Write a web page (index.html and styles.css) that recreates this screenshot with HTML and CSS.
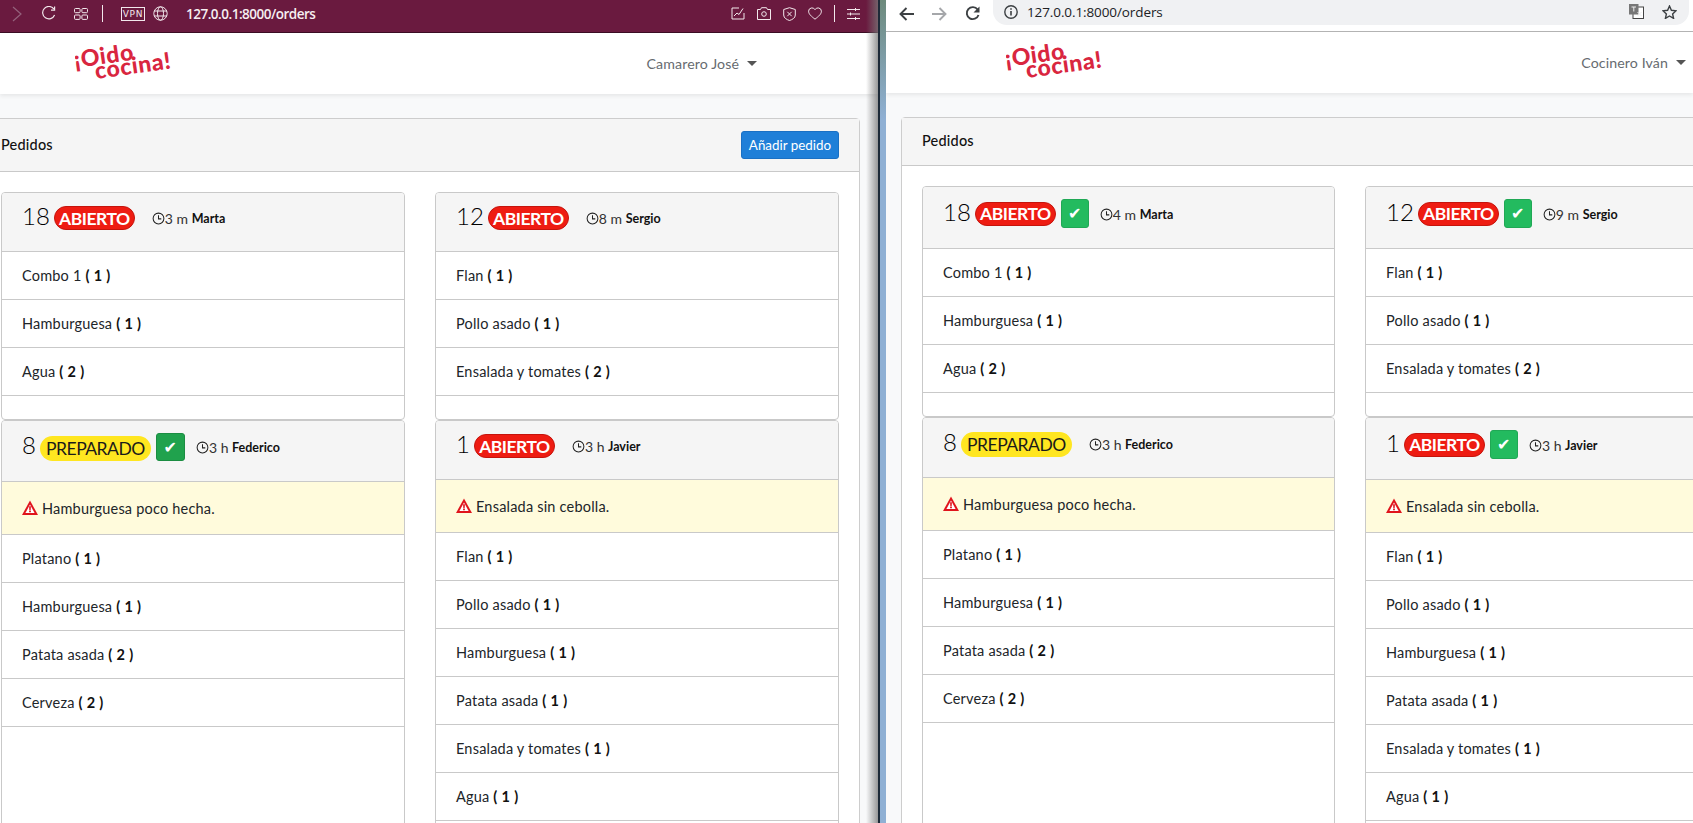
FILE: index.html
```html
<!DOCTYPE html>
<html lang="es">
<head>
<meta charset="utf-8">
<title>Oído cocina - pedidos</title>
<link rel="stylesheet" href="styles.css">
</head>
<body>
<svg class="defs" width="0" height="0" aria-hidden="true">
  <symbol id="clock" viewBox="0 0 14 14"><circle cx="7" cy="7" r="5.8" fill="none" stroke="currentColor" stroke-width="1.1"/><path d="M7 3.4V7.4H10" fill="none" stroke="currentColor" stroke-width="1.1"/></symbol>
  <symbol id="warn" viewBox="0 0 16 16"><path d="M8 .6 16 15H0Z" fill="#e0141c"/><path d="M8 4.6 3.400 13H12.600Z" fill="#fff"/><path d="M7.100 6.200h1.800l-.2 3.800H7.300Z M7.100 10.600h1.800v1.600H7.100Z" fill="#e0141c"/></symbol>
</svg>

<main class="desktop">
  <section class="window window-left">
    <header class="opera-bar">
      <svg class="tb-icon dim" width="10" height="16" viewBox="0 0 10 16"><path d="M1 1l8 7-8 7" fill="none" stroke="currentColor" stroke-width="1.2"/></svg>
      <svg class="tb-icon" width="15" height="15" viewBox="0 0 15 15"><path d="M13 3.2A6.2 6.2 0 1 0 13.6 9" fill="none" stroke="currentColor" stroke-width="1.2"/><path d="M13.6 .6v3.6H10" fill="none" stroke="currentColor" stroke-width="1.2"/></svg>
      <svg class="tb-icon" width="14" height="12" viewBox="0 0 14 12"><g fill="none" stroke="currentColor"><rect x=".5" y=".5" width="5.6" height="4.2" rx="1"/><rect x="7.9" y=".5" width="5.6" height="4.2" rx="1"/><rect x=".5" y="7" width="5.6" height="4.4" rx="1"/><rect x="7.9" y="7" width="5.6" height="4.4" rx="1"/></g></svg>
      <span class="tb-sep"></span>
      <span class="vpn">VPN</span>
      <svg class="tb-icon" width="15" height="15" viewBox="0 0 15 15"><g fill="none" stroke="currentColor"><circle cx="7.5" cy="7.5" r="6.7"/><ellipse cx="7.5" cy="7.5" rx="3" ry="6.7"/><path d="M1 5h13M1 10h13"/></g></svg>
      <span class="opera-url">127.0.0.1:8000/orders</span>
      <span class="opera-actions">
        <svg class="tb-icon" width="14" height="13" viewBox="0 0 14 13"><path d="M8 1H1v11h12V6" fill="none" stroke="currentColor"/><path d="M3 9l3-3 2 1.5 4-6" fill="none" stroke="currentColor"/></svg>
        <svg class="tb-icon" width="14" height="13" viewBox="0 0 14 13"><path d="M.5 2.5h3L4.500.7h5l1 1.800h3v10H.5Z" fill="none" stroke="currentColor"/><circle cx="7" cy="7" r="2.300" fill="none" stroke="currentColor"/></svg>
        <svg class="tb-icon" width="13" height="14" viewBox="0 0 13 14"><path d="M6.500.7 12.300 2.500V8c0 3-3 4.600-5.800 5.500C3.700 12.600.7 11 .7 8V2.500Z" fill="none" stroke="currentColor"/><path d="M4.300 4.800l4.400 4.400M8.700 4.800l-4.400 4.400" fill="none" stroke="currentColor"/></svg>
        <svg class="tb-icon" width="14" height="13" viewBox="0 0 14 13"><path d="M7 12.200C3.500 9.400.6 7.200.6 4.200A3.400 3.400 0 0 1 7 2.700 3.400 3.400 0 0 1 13.400 4.200C13.400 7.200 10.500 9.400 7 12.200Z" fill="none" stroke="currentColor"/></svg>
        <span class="tb-sep"></span>
        <svg class="tb-icon" width="13" height="12" viewBox="0 0 13 12"><path d="M0 1.500h13M0 6h13M0 10.500h13M8.500 0v3M3.500 4.500v3M8.500 9v3" fill="none" stroke="currentColor"/></svg>
      </span>
    </header>
    <nav class="navbar">
      <svg class="logo" width="112" height="58" viewBox="0 0 112 58"><text class="logo-text" transform="translate(0 33) rotate(-8)">¡Oido</text><text class="logo-text" transform="translate(21 44) rotate(-8)">cocina!</text></svg>
      <span class="user">Camarero José<i class="caret"></i></span>
    </nav>
    <div class="content">
      <article class="panel">
        <header class="panel-head"><span class="panel-title">Pedidos</span><button class="btn-add">Añadir pedido</button></header>
        <div class="orders">
          <section class="order">
            <header class="order-head"><span class="num">18</span><span class="badge open">ABIERTO</span><span class="meta"><svg class="clock"><use href="#clock"/></svg>3 m <b>Marta</b></span></header>
            <ul class="items"><li>Combo 1 <b>( 1 )</b></li><li>Hamburguesa <b>( 1 )</b></li><li>Agua <b>( 2 )</b></li></ul>
          </section>
          <section class="order">
            <header class="order-head"><span class="num">12</span><span class="badge open">ABIERTO</span><span class="meta"><svg class="clock"><use href="#clock"/></svg>8 m <b>Sergio</b></span></header>
            <ul class="items"><li>Flan <b>( 1 )</b></li><li>Pollo asado <b>( 1 )</b></li><li>Ensalada y tomates <b>( 2 )</b></li></ul>
          </section>
          <section class="order">
            <header class="order-head"><span class="num">8</span><span class="badge ready">PREPARADO</span><span class="ok">✔</span><span class="meta"><svg class="clock"><use href="#clock"/></svg>3 h <b>Federico</b></span></header>
            <div class="note"><svg class="warn"><use href="#warn"/></svg>Hamburguesa poco hecha.</div>
            <ul class="items"><li>Platano <b>( 1 )</b></li><li>Hamburguesa <b>( 1 )</b></li><li>Patata asada <b>( 2 )</b></li><li>Cerveza <b>( 2 )</b></li></ul>
          </section>
          <section class="order">
            <header class="order-head"><span class="num">1</span><span class="badge open">ABIERTO</span><span class="meta"><svg class="clock"><use href="#clock"/></svg>3 h <b>Javier</b></span></header>
            <div class="note"><svg class="warn"><use href="#warn"/></svg>Ensalada sin cebolla.</div>
            <ul class="items"><li>Flan <b>( 1 )</b></li><li>Pollo asado <b>( 1 )</b></li><li>Hamburguesa <b>( 1 )</b></li><li>Patata asada <b>( 1 )</b></li><li>Ensalada y tomates <b>( 1 )</b></li><li>Agua <b>( 1 )</b></li></ul>
          </section>
        </div>
      </article>
    </div>
  </section>

  <section class="window window-right">
    <header class="chrome-bar">
      <svg class="ch-icon" width="15" height="14" viewBox="0 0 15 14"><path d="M15 7H1.500M7.500 1 1.500 7l6 6" fill="none" stroke="currentColor" stroke-width="1.900"/></svg>
      <svg class="ch-icon faded" width="15" height="14" viewBox="0 0 15 14"><path d="M0 7h13.500M7.500 1l6 6-6 6" fill="none" stroke="currentColor" stroke-width="1.900"/></svg>
      <svg class="ch-icon" width="15" height="15" viewBox="0 0 15 15"><path d="M12.600 3.500A6 6 0 1 0 13.500 9" fill="none" stroke="currentColor" stroke-width="1.900"/><path d="M14.500 .5v6h-6Z" fill="currentColor"/></svg>
      <div class="omnibox">
        <svg class="ch-icon" width="14" height="14" viewBox="0 0 14 14"><circle cx="7" cy="7" r="6.200" fill="none" stroke="currentColor" stroke-width="1.400"/><path d="M7 6v4.500M7 3.300v1.500" stroke="currentColor" stroke-width="1.600"/></svg>
        <span class="chrome-url">127.0.0.1:8000/orders</span>
        <svg class="translate" width="15" height="15" viewBox="0 0 15 15"><rect x="4" y="3" width="10.500" height="11.500" fill="#fff" stroke="#444"/><rect x="0" y="0" width="9.500" height="10.500" fill="#777"/><path d="M2.500 3h4.500M4.800 3v4.500M8.500 8l4 4M12.500 8l-4 4" stroke="#eee" fill="none"/></svg>
        <svg class="ch-icon star" width="15" height="14" viewBox="0 0 15 14"><path d="M7.500 1l1.900 4.300 4.600.5-3.400 3.100 1 4.500-4.100-2.400-4.100 2.400 1-4.500L1 5.800l4.600-.5Z" fill="none" stroke="currentColor" stroke-width="1.400"/></svg>
      </div>
    </header>
    <nav class="navbar">
      <svg class="logo" width="112" height="58" viewBox="0 0 112 58"><text class="logo-text" transform="translate(0 33) rotate(-8)">¡Oido</text><text class="logo-text" transform="translate(21 44) rotate(-8)">cocina!</text></svg>
      <span class="user">Cocinero Iván<i class="caret"></i></span>
    </nav>
    <div class="content">
      <article class="panel">
        <header class="panel-head"><span class="panel-title">Pedidos</span></header>
        <div class="orders">
          <section class="order">
            <header class="order-head"><span class="num">18</span><span class="badge open">ABIERTO</span><span class="ok">✔</span><span class="meta"><svg class="clock"><use href="#clock"/></svg>4 m <b>Marta</b></span></header>
            <ul class="items"><li>Combo 1 <b>( 1 )</b></li><li>Hamburguesa <b>( 1 )</b></li><li>Agua <b>( 2 )</b></li></ul>
          </section>
          <section class="order">
            <header class="order-head"><span class="num">12</span><span class="badge open">ABIERTO</span><span class="ok">✔</span><span class="meta"><svg class="clock"><use href="#clock"/></svg>9 m <b>Sergio</b></span></header>
            <ul class="items"><li>Flan <b>( 1 )</b></li><li>Pollo asado <b>( 1 )</b></li><li>Ensalada y tomates <b>( 2 )</b></li></ul>
          </section>
          <section class="order">
            <header class="order-head"><span class="num">8</span><span class="badge ready">PREPARADO</span><span class="meta"><svg class="clock"><use href="#clock"/></svg>3 h <b>Federico</b></span></header>
            <div class="note"><svg class="warn"><use href="#warn"/></svg>Hamburguesa poco hecha.</div>
            <ul class="items"><li>Platano <b>( 1 )</b></li><li>Hamburguesa <b>( 1 )</b></li><li>Patata asada <b>( 2 )</b></li><li>Cerveza <b>( 2 )</b></li></ul>
          </section>
          <section class="order">
            <header class="order-head"><span class="num">1</span><span class="badge open">ABIERTO</span><span class="ok">✔</span><span class="meta"><svg class="clock"><use href="#clock"/></svg>3 h <b>Javier</b></span></header>
            <div class="note"><svg class="warn"><use href="#warn"/></svg>Ensalada sin cebolla.</div>
            <ul class="items"><li>Flan <b>( 1 )</b></li><li>Pollo asado <b>( 1 )</b></li><li>Hamburguesa <b>( 1 )</b></li><li>Patata asada <b>( 1 )</b></li><li>Ensalada y tomates <b>( 1 )</b></li><li>Agua <b>( 1 )</b></li></ul>
          </section>
        </div>
      </article>
    </div>
  </section>
</main>
</body>
</html>
```
FILE: styles.css
```css
* { box-sizing: border-box; }
html, body { margin: 0; height: 100%; overflow: hidden; }
body { font-family: Lato, "Open Sans", sans-serif; font-size: 14.5px; letter-spacing: .2px; color: #212529; background: #8fb0d4; }
.defs { position: absolute; }
.desktop { position: relative; width: 1693px; height: 823px; overflow: hidden; background: linear-gradient(#6d8a7c, #8fb0d4 120px); }

.window { position: absolute; top: 0; height: 823px; overflow: hidden; background: #f8f9fa; }
.window-left { left: 0; width: 880px; }
.window-right { left: 886px; width: 807px; }
.window-left::after { content: ""; position: absolute; top: 0; right: 0; bottom: 0; width: 14px; background: linear-gradient(90deg, rgba(120,120,120,0), rgba(120,120,120,.75) 85%, #1d2a38 86%); }

/* browser bars */
.opera-bar { display: flex; align-items: center; height: 33px; padding: 0 0 5px 12px; background: #6a1a3f; border-bottom: 1px solid #3c0d24; color: #f2e8ec; }
.tb-icon { flex: none; display: block; }
.dim { color: #94627c; margin-right: 19px; }
.opera-bar > .tb-icon:nth-child(2) { margin-right: 18px; }
.opera-bar > .tb-icon:nth-child(3) { margin-right: 14px; }
.tb-sep { width: 1px; height: 17px; background: #f2e8ec; flex: none; }
.vpn { flex: none; margin: 0 8px 0 18px; width: 24px; height: 14px; border: 1px solid #f2e8ec; font: 400 9px/12px "DejaVu Sans", sans-serif; letter-spacing: .8px; text-align: center; }
.opera-url { margin-left: 18px; font: 600 13.5px "Open Sans", sans-serif; letter-spacing: -.5px; color: #f6eef1; }
.opera-actions { display: flex; align-items: center; gap: 12px; margin-left: auto; margin-right: 20px; }

.chrome-bar { display: flex; align-items: center; height: 32px; padding: 0 4px 4px 13px; background: #fff; border-bottom: 1px solid #b5b5b5; color: #3c4043; }
.ch-icon { flex: none; display: block; margin-right: 18px; }
.faded { color: #a5a7aa; }
.omnibox { display: flex; align-items: center; flex: 1; height: 27px; margin-left: -5px; margin-top: -4px; padding: 0 12px 0 11px; background: #f0f1f3; border-radius: 0 0 14px 14px; }
.omnibox > .ch-icon:first-child { margin-right: 9px; }
.chrome-url { flex: 1; font: 400 13.5px "Open Sans", sans-serif; letter-spacing: -.1px; color: #202124; }
.translate { flex: none; display: block; margin-right: 18px; }
.star { margin-right: 0; }

/* navbar */
.navbar { display: flex; align-items: center; justify-content: space-between; height: 61px; background: #fff; box-shadow: 0 2px 4px rgba(0,0,0,.075); }
.window-left .navbar { padding: 0 123px 0 75px; }
.window-right .navbar { padding: 0 7px 0 120px; }
.logo { display: block; margin-top: 1px; }
.logo-text { font: 900 23px Lato, sans-serif; letter-spacing: .6px; fill: #d9263f; }
.user { display: flex; align-items: center; font-size: 14.2px; letter-spacing: .1px; color: #666b70; }
.caret { display: block; margin-left: 8px; width: 0; height: 0; border: 5px solid transparent; border-top: 5px solid #555; border-bottom: 0; }

/* cards */
.content { padding-top: 24px; }
.window-left .panel { margin-left: -20px; width: 880px; }
.window-right .panel { margin-left: 15px; width: 1000px; }
.panel { background: #fff; border: 1px solid #cdcdcd; border-radius: 4px; }
.panel-head { display: flex; align-items: center; justify-content: space-between; padding: 12px 20px; background: #f5f5f5; border-bottom: 1px solid #c9c9c9; font-weight: 500; color: #111; min-height: 48px; }
.panel-title { margin-top: -2px; }
.btn-add { height: 28px; width: 98px; padding: 0; border: 1px solid #1a70c4; border-radius: 3px; background: #1f7fd8; color: #fff; font: 400 13.4px Lato, sans-serif; letter-spacing: 0; }
.orders { display: grid; column-gap: 30px; padding: 20px; }
.window-left .orders { grid-template-columns: 404px 404px; }
.window-right .orders { grid-template-columns: 413px 413px; }

.order { background: #fff; border: 1px solid #c9c9c9; border-radius: 4px; }
.order-head { display: flex; align-items: center; min-height: 59px; padding: 12px 20px 20px; background: #f5f5f5; border-bottom: 1px solid #c9c9c9; border-radius: 3px 3px 0 0; }
.num { font-size: 24px; font-weight: 300; line-height: 26px; letter-spacing: 0; color: #000; margin-top: -4px; margin-right: 4px; }
.badge { display: inline-flex; align-items: center; justify-content: center; flex: none; height: 24px; border-radius: 13px; font-size: 17.5px; letter-spacing: -.5px; }
.open { width: 81px; background: #ee1c12; border: 1px solid #c5140c; color: #fff; font-weight: 700; }
.ready { width: 111px; height: 25px; background: #ffe620; color: #1a1a1a; font-weight: 400; margin-top: 2px; }
.ok { flex: none; display: flex; align-items: center; justify-content: center; margin-left: 5px; width: 29px; height: 28px; border-radius: 3px; font: 400 16px "DejaVu Sans", sans-serif; color: #fff; }
.window-left .ok { background: #20a24d; border: 1px solid #1b8d42; }
.window-right .ok { height: 29px; width: 28px; background: #23bb5f; border: 1px solid #20a855; }
.meta { display: flex; align-items: center; white-space: pre; margin-left: 11px; margin-top: 1px; font-size: 14px; letter-spacing: 0; color: #333; }
.meta b { font-weight: 700; font-size: 12.5px; letter-spacing: 0; color: #111; }
.badge.open + .meta, .badge.ready + .meta { margin-left: 17px; }
.clock { width: 13px; height: 13px; margin-right: 0; color: #222; }

.note { display: flex; align-items: center; height: 53px; padding: 0 20px 0 20px; background: #fffbdc; border-bottom: 1px solid #c9c9c9; }
.warn { width: 16px; height: 16px; margin-right: 4px; flex: none; }
.items { list-style: none; margin: 0 0 23px; padding: 0; }
.items li { height: 48px; padding: 13px 20px; line-height: 21px; border-bottom: 1px solid #c9c9c9; white-space: pre; }
.items b { font-weight: 700; color: #111; letter-spacing: .35px; }
```
